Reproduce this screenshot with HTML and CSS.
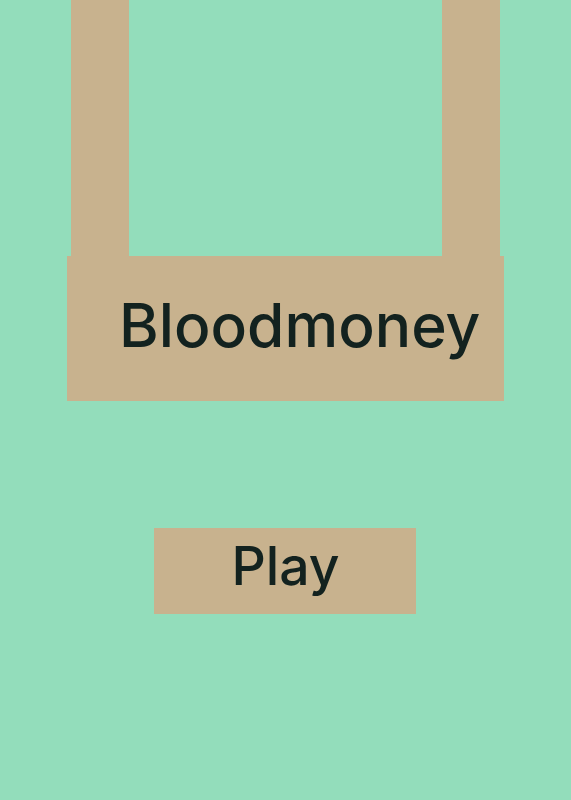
FILE: index.html
```html
<!DOCTYPE html>
<html lang="en">
<head>
  <meta charset="UTF-8" />
  <meta name="viewport" content="width=device-width, initial-scale=1.0"/>
  <title>Bloodmoney</title>
  <link rel="stylesheet" href="styles.css">
</head>
<body>
  <div class="menu">
    <div class="sign">
      <div class="ropes">
        <div class="rope"></div>
        <div class="rope"></div>
      </div>
      <div class="board">
        <h1 class="title">Bloodmoney</h1>
      </div>
    </div>
    <button class="play-btn">Play</button>
  </div>
</body>
</html>
```

FILE: styles.css
```css
body {
  margin: 0;
  padding: 0;
  background: #93ddbb;
  font-family: Inter, "Noto Sans", sans-serif;
  color: #13221f;
}

.menu {
  display: flex;
  flex-direction: column;
  align-items: center;
  min-height: 100vh;
}

.sign {
  width: 437px;
  display: flex;
  flex-direction: column;
}

/* two straps holding the board up */
.ropes {
  display: flex;
  justify-content: space-between;
  padding: 0 4px;
  height: 256px;
}

.rope {
  width: 58px;
  background: #c8b28e;
}

.board {
  background: #c8b28e;
  height: 145px;
  display: flex;
  align-items: center;
  padding-left: 52px;
  box-sizing: border-box;
}

.title {
  margin: -6px 0 0 0;
  font-size: 60.5px;
  font-weight: 500;
  line-height: 1;
}

.play-btn {
  margin-top: 127px;
  margin-left: -2px;
  width: 262px;
  height: 86px;
  background: #c8b28e;
  border: none;
  border-radius: 0;
  font-family: inherit;
  font-size: 53.5px;
  font-weight: 500;
  color: #13221f;
  padding: 0 0 12px 2px;
  cursor: pointer;
}
```
